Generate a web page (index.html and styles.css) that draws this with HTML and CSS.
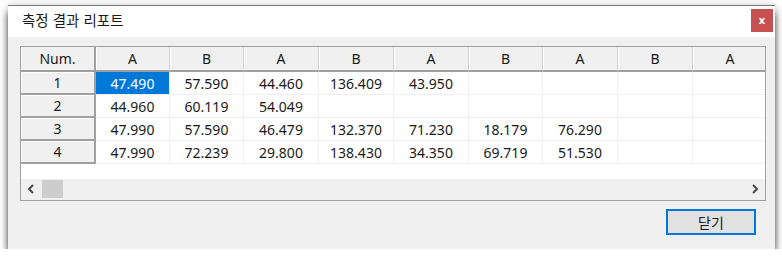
FILE: index.html
```html
<!DOCTYPE html>
<html lang="ko">
<head>
    <meta charset="UTF-8">
    <meta name="viewport" content="width=device-width, initial-scale=1.0">
    <title>측정 결과 리포트</title>
    <link rel="stylesheet" href="styles.css">
</head>
<body>
    <div class="window">
        <div class="titlebar">
            <span class="title">측정 결과 리포트</span>
            <button class="close-btn">x</button>
        </div>

        <div class="content">
            <div class="grid-frame">
                <div class="grid">
                    <div class="hcell corner">Num.</div>
                    <div class="hcell">A</div>
                    <div class="hcell">B</div>
                    <div class="hcell">A</div>
                    <div class="hcell">B</div>
                    <div class="hcell">A</div>
                    <div class="hcell">B</div>
                    <div class="hcell">A</div>
                    <div class="hcell">B</div>
                    <div class="hcell">A</div>

                    <div class="rcell">1</div>
                    <div class="cell selected">47.490</div>
                    <div class="cell">57.590</div>
                    <div class="cell">44.460</div>
                    <div class="cell">136.409</div>
                    <div class="cell">43.950</div>
                    <div class="cell"></div>
                    <div class="cell"></div>
                    <div class="cell"></div>
                    <div class="cell"></div>

                    <div class="rcell">2</div>
                    <div class="cell">44.960</div>
                    <div class="cell">60.119</div>
                    <div class="cell">54.049</div>
                    <div class="cell"></div>
                    <div class="cell"></div>
                    <div class="cell"></div>
                    <div class="cell"></div>
                    <div class="cell"></div>
                    <div class="cell"></div>

                    <div class="rcell">3</div>
                    <div class="cell">47.990</div>
                    <div class="cell">57.590</div>
                    <div class="cell">46.479</div>
                    <div class="cell">132.370</div>
                    <div class="cell">71.230</div>
                    <div class="cell">18.179</div>
                    <div class="cell">76.290</div>
                    <div class="cell"></div>
                    <div class="cell"></div>

                    <div class="rcell">4</div>
                    <div class="cell">47.990</div>
                    <div class="cell">72.239</div>
                    <div class="cell">29.800</div>
                    <div class="cell">138.430</div>
                    <div class="cell">34.350</div>
                    <div class="cell">69.719</div>
                    <div class="cell">51.530</div>
                    <div class="cell"></div>
                    <div class="cell"></div>
                </div>

                <div class="grid-empty"></div>

                <!-- horizontal scrollbar -->
                <div class="hscroll">
                    <span class="arrow">
                        <svg width="8" height="10" viewBox="0 0 8 10"><path d="M6 1 L2 5 L6 9" fill="none" stroke="#4a4a4a" stroke-width="2"/></svg>
                    </span>
                    <span class="thumb"></span>
                    <span class="track"></span>
                    <span class="arrow">
                        <svg width="8" height="10" viewBox="0 0 8 10"><path d="M2 1 L6 5 L2 9" fill="none" stroke="#4a4a4a" stroke-width="2"/></svg>
                    </span>
                </div>
            </div>

            <div class="footer">
                <button class="close-dialog">닫기</button>
            </div>
        </div>
    </div>
</body>
</html>
```

FILE: styles.css
```css
body {
    margin: 0;
    padding: 5px 7px 0 8px;
    background-color: #ffffff;
    font-family: "Noto Sans", "Noto Sans CJK KR", sans-serif;
    color: #1a1a1a;
}

.window {
    width: 767px;
    height: 244px;
    box-sizing: border-box;
    border-top: 1px solid #7c7c7c;
    background-color: #f0f0f0;
    box-shadow: 0 8px 7px rgba(0, 0, 0, 0.7), 0 0 8px rgba(0, 0, 0, 0.22);
    display: flex;
    flex-direction: column;
}

.titlebar {
    height: 31px;
    background-color: #fff;
    display: flex;
    align-items: flex-start;
    padding-left: 14px;
}

.title {
    font-family: "Noto Sans CJK KR", sans-serif;
    font-size: 14.5px;
    line-height: 27px;
    color: #1a1a1a;
}

.close-btn {
    margin: 3px 2px 0 auto;
    width: 22px;
    height: 23px;
    border: none;
    padding: 0 0 3px 0;
    background-color: #c75050;
    color: #fff;
    font-family: "Noto Sans", sans-serif;
    font-size: 11px;
    font-weight: bold;
}

.content {
    padding: 9px 9px 0 12px;
}

/* grid view */
.grid-frame {
    border: 1px solid #a0a0a0;
    background-color: #fff;
    overflow: hidden;
}

.grid {
    display: grid;
    grid-template-columns: 75px 74px 74px 75px 75px 75px 74px 75px 75px 75px;
    grid-template-rows: 25px repeat(4, 23px);
    width: 747px;
    font-size: 14px;
}

.hcell, .rcell, .cell {
    box-sizing: border-box;
    display: flex;
    align-items: center;
    justify-content: center;
}

.hcell {
    background-color: #f0f0f0;
    border-right: 1px solid #d0d0d0;
    border-bottom: 2px solid #a0a0a0;
    box-shadow: inset 1px 0 0 #fff;
}

.corner {
    border-right: 2px solid #a0a0a0;
}

.rcell {
    background-color: #f0f0f0;
    border-right: 2px solid #a0a0a0;
    border-bottom: 2px solid #a0a0a0;
    box-shadow: inset 1px 1px 0 #fff;
}

.cell {
    border-right: 1px solid #efefef;
    border-bottom: 1px solid #efefef;
}

.selected {
    background-color: #0078d7;
    color: #fff;
}

.grid-empty {
    height: 15px;
}

.hscroll {
    height: 21px;
    background-color: #f0f0f0;
    display: flex;
    align-items: flex-start;
}

.arrow {
    width: 20px;
    height: 20px;
    display: flex;
    align-items: center;
    justify-content: center;
}

.thumb {
    width: 21px;
    height: 18px;
    margin: 1px 0 0 1px;
    background-color: #cdcdcd;
}

.track {
    flex: 1;
}

.footer {
    display: flex;
    justify-content: flex-end;
    padding: 8px 10px 0 0;
}

.close-dialog {
    width: 90px;
    height: 26px;
    border: 2px solid #0078d7;
    background-color: #e1e1e1;
    font-family: "Noto Sans CJK KR", sans-serif;
    font-size: 14px;
    color: #1a1a1a;
    padding: 0;
}
```
